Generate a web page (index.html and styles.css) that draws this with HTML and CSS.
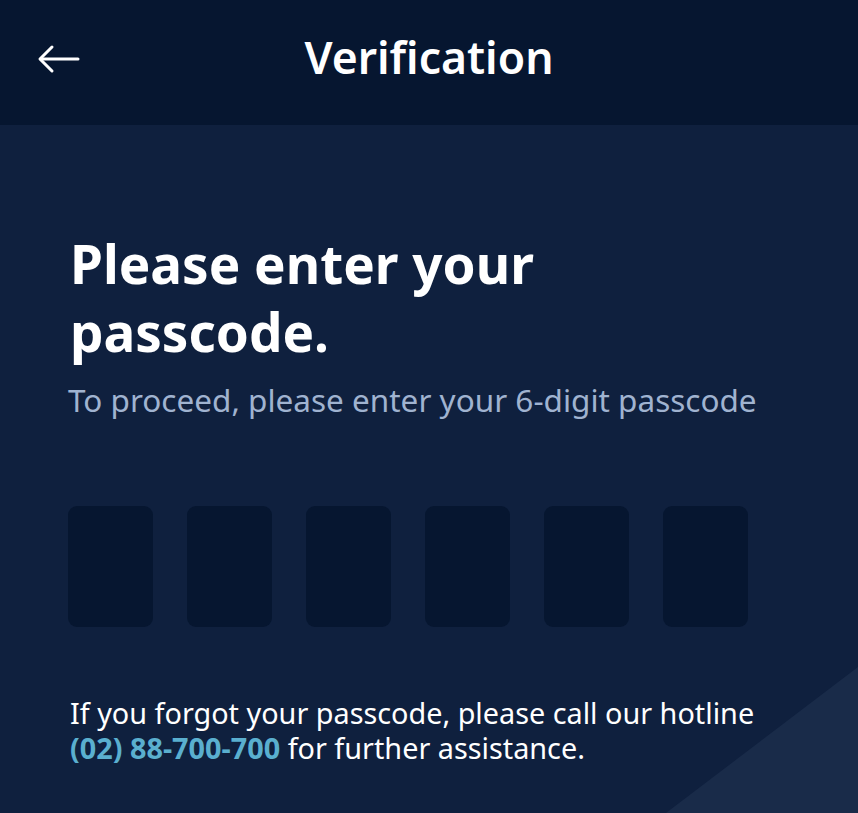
FILE: index.html
```html
<!DOCTYPE html>
<html lang="en">
<head>
<meta charset="UTF-8" />
<meta name="viewport" content="width=device-width, initial-scale=1.0" />
<title>Verification</title>
<link rel="stylesheet" href="styles.css">
</head>
<body>

<header class="topbar">
  <button class="back" aria-label="Back">
    <svg width="44" height="30" viewBox="0 0 44 30" fill="none" stroke="#fff" stroke-width="3" stroke-linecap="round" stroke-linejoin="round">
      <path d="M41 15H4"/>
      <path d="M15 3L3 15l12 12"/>
    </svg>
  </button>
  <h1>Verification</h1>
</header>

<main class="content">
  <h2>Please enter your<br>passcode.</h2>
  <p class="sub">To proceed, please enter your 6-digit passcode</p>

  <div class="pins">
    <div class="pin"></div>
    <div class="pin"></div>
    <div class="pin"></div>
    <div class="pin"></div>
    <div class="pin"></div>
    <div class="pin"></div>
  </div>

  <p class="help">If you forgot your passcode, please call our hotline<br><span class="phone">(02) 88-700-700</span> for further assistance.</p>
</main>

</body>
</html>
```

FILE: styles.css
```css
html, body {
  margin: 0;
  height: 100%;
}
body {
  background: #0f203e;
  font-family: "Noto Sans", "Open Sans", sans-serif;
  color: #fff;
  overflow: hidden;
  position: relative;
}
body::after {
  content: "";
  position: absolute;
  right: 0;
  bottom: 0;
  width: 192px;
  height: 146px;
  background: #1b2c4a;
  clip-path: polygon(100% 0, 100% 100%, 0 100%);
  opacity: 0.9;
}
.topbar {
  height: 125px;
  background: #061630;
  display: flex;
  align-items: center;
  justify-content: center;
  position: relative;
}
.back {
  position: absolute;
  left: 37px;
  top: 44px;
  background: none;
  border: none;
  padding: 0;
  cursor: pointer;
}
.topbar h1 {
  margin: 0 0 12px 0;
  font-size: 44.5px;
  font-weight: 600;
}
.content {
  padding: 0 68px;
  position: relative;
  z-index: 1;
}
.content h2 {
  margin: 105px 0 0 2px;
  font-size: 53px;
  line-height: 68px;
  font-weight: 700;
}
.sub {
  margin: 12px 0 0 0;
  font-size: 31.5px;
  color: #a0b3d0;
}
.pins {
  display: flex;
  gap: 34px;
  margin-top: 85px;
}
.pin {
  width: 85px;
  height: 121px;
  border-radius: 9px;
  background: #061630;
}
.help {
  margin: 68px 0 0 2px;
  font-size: 28.8px;
  line-height: 35px;
  white-space: nowrap;
}
.phone {
  color: #5aafcf;
  font-weight: 700;
}
```
